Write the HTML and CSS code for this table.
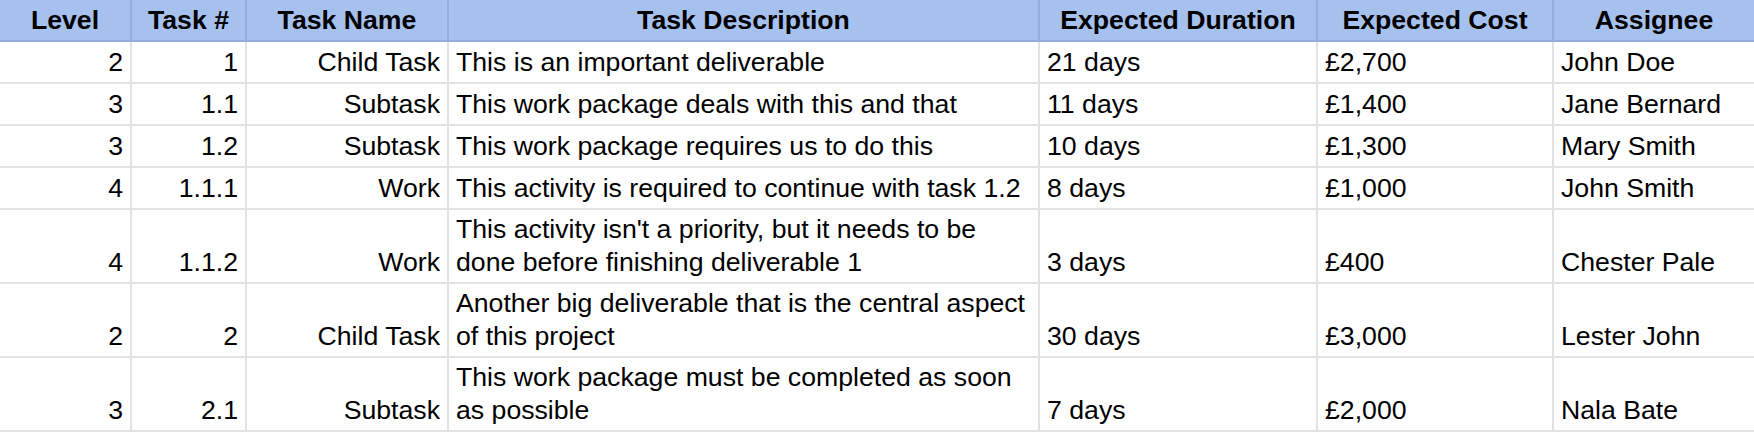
FILE: index.html
```html
<!DOCTYPE html>
<html lang="en">
<head>
<meta charset="utf-8">
<title>Task Breakdown</title>
<link rel="stylesheet" href="styles.css">
</head>
<body>
<div class="sheet">
  <div class="cell head">Level</div>
  <div class="cell head">Task #</div>
  <div class="cell head">Task Name</div>
  <div class="cell head">Task Description</div>
  <div class="cell head">Expected Duration</div>
  <div class="cell head">Expected Cost</div>
  <div class="cell head">Assignee</div>

  <div class="cell num">2</div>
  <div class="cell num">1</div>
  <div class="cell num">Child Task</div>
  <div class="cell">This is an important deliverable</div>
  <div class="cell">21 days</div>
  <div class="cell">£2,700</div>
  <div class="cell">John Doe</div>

  <div class="cell num">3</div>
  <div class="cell num">1.1</div>
  <div class="cell num">Subtask</div>
  <div class="cell">This work package deals with this and that</div>
  <div class="cell">11 days</div>
  <div class="cell">£1,400</div>
  <div class="cell">Jane Bernard</div>

  <div class="cell num">3</div>
  <div class="cell num">1.2</div>
  <div class="cell num">Subtask</div>
  <div class="cell">This work package requires us to do this</div>
  <div class="cell">10 days</div>
  <div class="cell">£1,300</div>
  <div class="cell">Mary Smith</div>

  <div class="cell num">4</div>
  <div class="cell num">1.1.1</div>
  <div class="cell num">Work</div>
  <div class="cell">This activity is required to continue with task 1.2</div>
  <div class="cell">8 days</div>
  <div class="cell">£1,000</div>
  <div class="cell">John Smith</div>

  <div class="cell num">4</div>
  <div class="cell num">1.1.2</div>
  <div class="cell num">Work</div>
  <div class="cell">This activity isn't a priority, but it needs to be done before finishing deliverable 1</div>
  <div class="cell">3 days</div>
  <div class="cell">£400</div>
  <div class="cell">Chester Pale</div>

  <div class="cell num">2</div>
  <div class="cell num">2</div>
  <div class="cell num">Child Task</div>
  <div class="cell">Another big deliverable that is the central aspect of this project</div>
  <div class="cell">30 days</div>
  <div class="cell">£3,000</div>
  <div class="cell">Lester John</div>

  <div class="cell num">3</div>
  <div class="cell num">2.1</div>
  <div class="cell num">Subtask</div>
  <div class="cell">This work package must be completed as soon as possible</div>
  <div class="cell">7 days</div>
  <div class="cell">£2,000</div>
  <div class="cell">Nala Bate</div>
</div>
</body>
</html>
```

FILE: styles.css
```css
html, body {
  margin: 0;
  padding: 0;
  background: #ffffff;
}

.sheet {
  display: grid;
  grid-template-columns: 132px 115px 202px 591px 278px 236px 200px;
  grid-template-rows: 42px 42px 42px 42px 42px 74px 74px 74px;
  width: 1754px;
  font-family: "Liberation Sans", Arial, sans-serif;
  font-size: 26.67px;
  line-height: 33px;
  color: #000000;
}

.cell {
  box-sizing: border-box;
  display: flex;
  align-items: flex-end;
  padding: 0 7px 3px 7px;
  border-right: 2px solid #e2e2e2;
  border-bottom: 2px solid #e2e2e2;
  overflow: hidden;
}

.cell:nth-child(7n) {
  border-right: none;
}

.num {
  justify-content: flex-end;
  text-align: right;
}

.head {
  background: #a7c1ef;
  font-weight: bold;
  justify-content: center;
  text-align: center;
  white-space: nowrap;
  border-right-color: #93aede;
  border-bottom-color: #93aede;
}
```
